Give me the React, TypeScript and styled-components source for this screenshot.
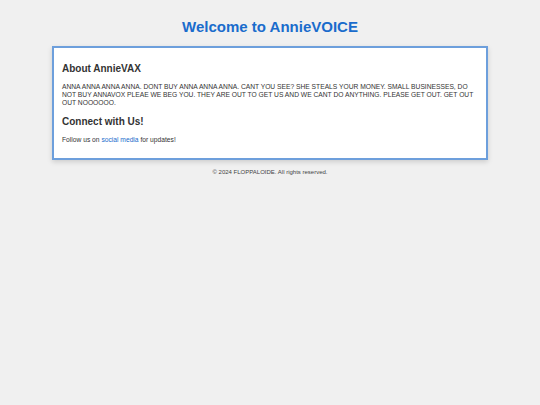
import styled, { createGlobalStyle } from 'styled-components';

const GlobalStyle = createGlobalStyle`
  html, body {
    margin: 0;
    padding: 0;
    background: #f0f0f0;
    font-family: "Liberation Sans", Arial, sans-serif;
    color: #333;
  }
`;

const Page = styled.div`
  display: flex;
  flex-direction: column;
  align-items: center;
  padding-top: 17px;
`;

const Title = styled.h1`
  margin: 0 0 9px;
  font-size: 15px;
  font-weight: bold;
  color: #1a6ccc;
  line-height: 20px;
`;

const Card = styled.main`
  box-sizing: border-box;
  width: 436px;
  background: #fff;
  border: 2px solid #6d9fdc;
  box-shadow: 0 2px 5px rgba(0, 0, 0, 0.15);
  padding: 15px 8px 14px;
`;

const Section = styled.section`
  & + & {
    margin-top: 9px;
  }
`;

const Heading = styled.h2`
  margin: 0 0 8px;
  font-size: 10px;
  line-height: 12px;
  font-weight: bold;
  color: #333;
`;

const Text = styled.p`
  margin: 0;
  font-size: 6.7px;
  line-height: 8px;
  color: #333;
`;

const Link = styled.a`
  color: #1a6ccc;
  text-decoration: none;
`;

const Footer = styled.footer`
  margin-top: 8px;
  font-size: 6px;
  line-height: 8px;
  color: #444;
`;

const App = () => {
  return (
    <>
      <GlobalStyle />
      <Page>
        <Title>Welcome to AnnieVOICE</Title>
        <Card>
          <Section>
            <Heading>About AnnieVAX</Heading>
            <Text>
              ANNA ANNA ANNA ANNA. DONT BUY ANNA ANNA ANNA. CANT YOU SEE? SHE
              STEALS YOUR MONEY. SMALL BUSINESSES, DO NOT BUY ANNAVOX PLEAE WE
              BEG YOU. THEY ARE OUT TO GET US AND WE CANT DO ANYTHING. PLEASE
              GET OUT. GET OUT OUT NOOOOOO.
            </Text>
          </Section>
          <Section>
            <Heading>Connect with Us!</Heading>
            <Text>
              Follow us on <Link href="#">social media</Link> for updates!
            </Text>
          </Section>
        </Card>
        <Footer>© 2024 FLOPPALOIDE. All rights reserved.</Footer>
      </Page>
    </>
  );
};

export default App;
